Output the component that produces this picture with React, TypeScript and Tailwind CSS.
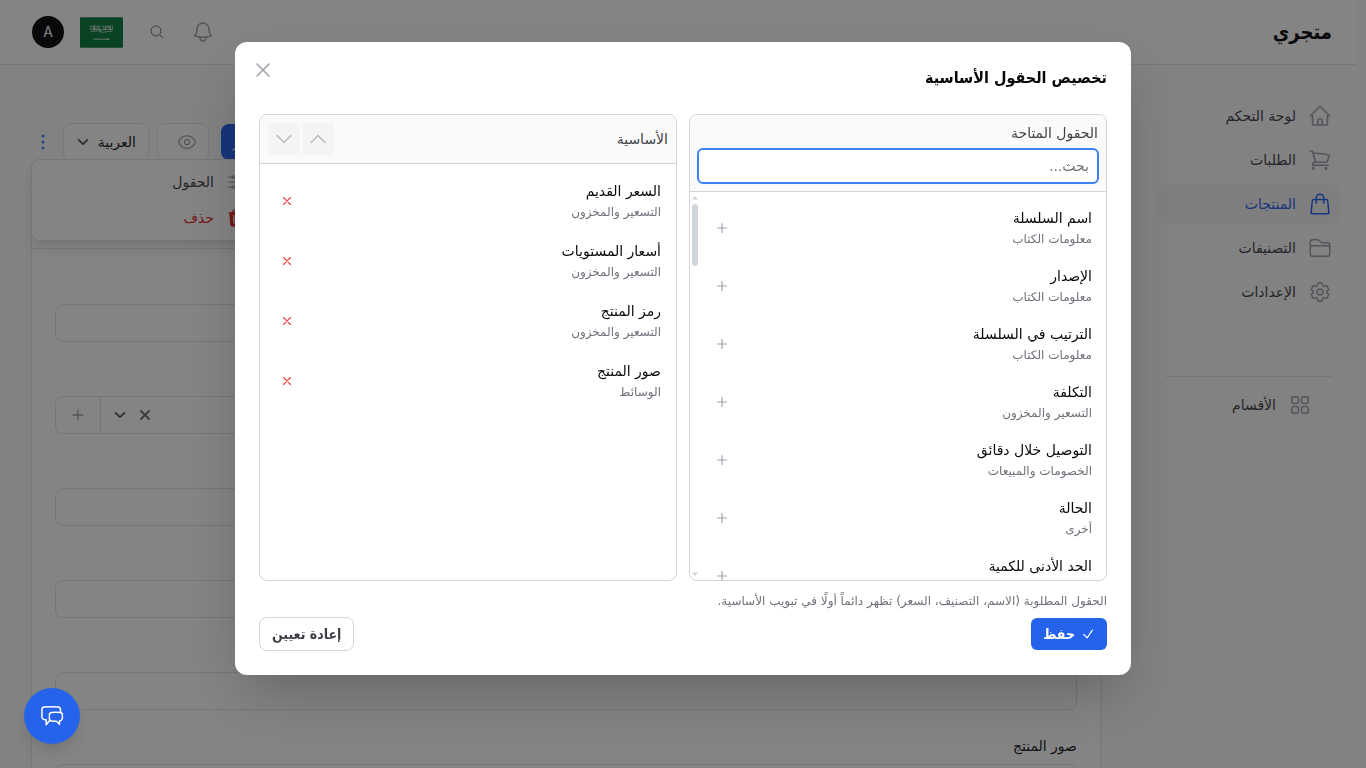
import { useState } from 'react'
import {
    HiOutlineHome,
    HiOutlineShoppingCart,
    HiOutlineShoppingBag,
    HiOutlineFolder,
    HiOutlineCog6Tooth,
    HiOutlineSquares2X2,
    HiOutlineBell,
    HiOutlineEye,
    HiOutlineXMark,
    HiOutlineChevronUp,
    HiOutlineChevronDown,
    HiOutlineCheck,
    HiOutlinePlus,
    HiTrash,
    HiOutlineMagnifyingGlass,
    HiEllipsisVertical,
    HiOutlineAdjustmentsHorizontal,
} from 'react-icons/hi2'

const navItems = [
    { label: 'لوحة التحكم', icon: HiOutlineHome, active: false },
    { label: 'الطلبات', icon: HiOutlineShoppingCart, active: false },
    { label: 'المنتجات', icon: HiOutlineShoppingBag, active: true },
    { label: 'التصنيفات', icon: HiOutlineFolder, active: false },
    { label: 'الإعدادات', icon: HiOutlineCog6Tooth, active: false },
]

const availableFields = [
    ['اسم السلسلة', 'معلومات الكتاب'],
    ['الإصدار', 'معلومات الكتاب'],
    ['الترتيب في السلسلة', 'معلومات الكتاب'],
    ['التكلفة', 'التسعير والمخزون'],
    ['التوصيل خلال دقائق', 'الخصومات والمبيعات'],
    ['الحالة', 'أخرى'],
    ['الحد الأدنى للكمية', ''],
]

const essentialFields = [
    ['السعر القديم', 'التسعير والمخزون'],
    ['أسعار المستويات', 'التسعير والمخزون'],
    ['رمز المنتج', 'التسعير والمخزون'],
    ['صور المنتج', 'الوسائط'],
]

function Header() {
    return (
        <header className="flex h-[65px] items-center justify-between border-b border-zinc-200 bg-white pr-6 pl-8">
            <span className="font-['DejaVu_Sans_Condensed','DejaVu_Sans',sans-serif] text-xl font-bold text-zinc-950">
                متجري
            </span>
            <div className="flex items-center">
                <button type="button" aria-label="الإشعارات" className="ml-5 text-zinc-400">
                    <HiOutlineBell className="size-6" />
                </button>
                <button type="button" aria-label="بحث" className="mx-1.5 text-zinc-500">
                    <HiOutlineMagnifyingGlass className="size-4" />
                </button>
                <svg viewBox="0 0 42 30" className="mr-5 ml-4 h-[31px] w-[43px]" aria-hidden="true">
                    <rect width="42" height="30" rx="1" fill="#0a7a3c" />
                    <path
                        d="M10.500 8v5M12 8l2 5M14 7.500v4h3M17 8l2 5M19.500 8v5h2M22 8l2 4M25 8v5M27 8l2 4M29.500 8v5M31.500 8v5M10.500 14c4 1 6-2 9 0s8-1 12 0M11 12h7M21 12h10M13 9.500h5M24 9.500h6"
                        stroke="#fff"
                        strokeOpacity="0.8"
                        strokeWidth="0.8"
                        fill="none"
                    />
                    <path d="M13 21.500h16M27 20.500v2" stroke="#fff" strokeOpacity="0.8" strokeWidth="0.9" />
                </svg>
                <button
                    type="button"
                    className="size-8 rounded-full bg-zinc-950 font-['Inter',sans-serif] text-sm text-white"
                >
                    A
                </button>
            </div>
        </header>
    )
}

function Sidebar() {
    return (
        <aside className="w-[199px] shrink-0 pt-[31px] pr-4">
            <nav className="flex flex-col gap-1">
                {navItems.map(({ label, icon: Icon, active }) => (
                    <a
                        key={label}
                        href="#"
                        className={
                            active
                                ? 'flex h-10 items-center gap-3 rounded-lg bg-zinc-100 px-2 text-[#2563eb]'
                                : 'flex h-10 items-center gap-3 rounded-lg px-2 text-zinc-700'
                        }
                    >
                        <Icon className={active ? 'size-6' : 'size-6 text-zinc-400'} />
                        {label}
                    </a>
                ))}
            </nav>
            <div className="mx-2 mt-16 border-t border-zinc-200 pt-2">
                <a href="#" className="flex h-10 items-center gap-3 px-5 text-zinc-700">
                    <HiOutlineSquares2X2 className="size-6 text-zinc-400" />
                    الأقسام
                </a>
            </div>
        </aside>
    )
}

function Toolbar() {
    return (
        <div className="relative flex items-center justify-end">
            <button type="button" className="h-9 w-24 rounded-lg bg-[#2563eb] pl-3 text-left text-white">
                نشر
            </button>
            <button
                type="button"
                aria-label="معاينة"
                className="mr-3 flex h-[38px] w-[52px] items-center justify-center rounded-lg border border-zinc-200 bg-white pl-2 text-zinc-400"
            >
                <HiOutlineEye className="size-5" />
            </button>
            <button
                type="button"
                className="mr-2 flex h-[38px] w-[86px] items-center justify-between rounded-lg border border-zinc-200 bg-white px-3 text-zinc-900"
            >
                العربية
                <HiOutlineChevronDown className="size-3.5 text-zinc-600" strokeWidth={3} />
            </button>
            <button type="button" aria-label="المزيد" className="mr-2 text-[#3b82f6]">
                <HiEllipsisVertical className="size-6" />
            </button>
            <div className="absolute top-9 left-0 z-10 w-58 rounded-lg border border-zinc-200 bg-white py-1 shadow-lg">
                <button type="button" className="flex h-9 w-full items-center gap-3 px-4 text-zinc-700">
                    <HiOutlineAdjustmentsHorizontal className="size-5 text-zinc-400" />
                    الحقول
                </button>
                <button type="button" className="flex h-9 w-full items-center gap-3 px-4 text-[#dc2626]">
                    <HiTrash className="size-5" />
                    حذف
                </button>
            </div>
        </div>
    )
}

const inputClass = 'block h-[38px] w-full rounded-lg border border-zinc-200 bg-transparent px-3'

function ProductForm() {
    return (
        <main className="min-w-0 flex-1 pt-[58px] pr-14 pl-[31px]">
            <Toolbar />
            <div className="rounded-lg border border-zinc-200 bg-white pt-[86px]">
                <div className="border-t border-zinc-200" />
                <div className="flex flex-col gap-[54px] px-[23px] pt-[55px]">
                    <input aria-label="الاسم" className={inputClass} />
                    <div className="flex h-[38px] items-stretch rounded-lg border border-zinc-200">
                        <div className="flex flex-1 items-center justify-end gap-2.5 px-3">
                            <button type="button" aria-label="مسح" className="text-zinc-500">
                                <HiOutlineXMark className="size-4" strokeWidth={3} />
                            </button>
                            <button type="button" aria-label="فتح" className="text-zinc-600">
                                <HiOutlineChevronDown className="size-3.5" strokeWidth={3} />
                            </button>
                        </div>
                        <button
                            type="button"
                            aria-label="إضافة"
                            className="flex w-[45px] items-center justify-center border-r border-zinc-200 text-zinc-400"
                        >
                            <HiOutlinePlus className="size-4" strokeWidth={2} />
                        </button>
                    </div>
                    <input aria-label="التصنيف" className={inputClass} />
                    <input aria-label="السعر" className={inputClass} />
                    <input aria-label="رمز المنتج" className={inputClass} />
                </div>
                <div className="px-[23px] pt-6">
                    <label htmlFor="product-images" className="mb-1.5 block leading-6 text-zinc-900">
                        صور المنتج
                    </label>
                    <input id="product-images" className={inputClass} />
                </div>
            </div>
        </main>
    )
}

function ScrollTrack() {
    return (
        <div className="flex w-2.5 shrink-0 flex-col items-center py-1" aria-hidden="true">
            <svg viewBox="0 0 6 4" className="mb-1 h-1 w-1.5 fill-zinc-300">
                <path d="M3 0 6 3.500H0z" />
            </svg>
            <div className="h-[62px] w-1.5 rounded-full bg-gray-300" />
            <svg viewBox="0 0 6 4" className="mt-auto h-1 w-1.5 fill-zinc-300">
                <path d="M3 4 0 .5h6z" />
            </svg>
        </div>
    )
}

function AvailablePanel() {
    const [query, setQuery] = useState('')
    const visible = availableFields.filter(([name]) => name.includes(query))

    return (
        <section className="flex min-h-0 flex-1 flex-col overflow-hidden rounded-lg border border-zinc-300">
            <div className="border-b border-zinc-300 bg-zinc-50 p-[7px]">
                <label htmlFor="field-search" className="mb-1 block px-px leading-[22px] text-zinc-700">
                    الحقول المتاحة
                </label>
                <input
                    id="field-search"
                    value={query}
                    onChange={(e) => setQuery(e.target.value)}
                    placeholder="بحث..."
                    className="block h-9 w-full rounded-md border-2 border-[#3b82f6] bg-white px-2 outline-none placeholder:text-zinc-500"
                />
            </div>
            <div className="flex min-h-0 flex-1">
                <ul className="flex min-w-0 flex-1 flex-col gap-0.5 overflow-y-auto p-2">
                    {visible.map(([name, group]) => (
                        <li key={name} className="flex h-14 shrink-0 items-center justify-between px-1.5">
                            <div className="leading-5">
                                <p className="text-zinc-950">{name}</p>
                                <p className="h-5 text-xs leading-[22px] text-zinc-500">{group}</p>
                            </div>
                            <button type="button" aria-label={`إضافة ${name}`} className="px-px text-zinc-400">
                                <HiOutlinePlus className="size-3.5" strokeWidth={2} />
                            </button>
                        </li>
                    ))}
                </ul>
                <ScrollTrack />
            </div>
        </section>
    )
}

function EssentialPanel() {
    return (
        <section className="flex min-h-0 flex-1 flex-col overflow-hidden rounded-lg border border-zinc-300">
            <div className="flex items-center justify-between border-b border-zinc-300 bg-zinc-50 p-2">
                <h3 className="text-zinc-700">الأساسية</h3>
                <div className="flex gap-0.5 text-[#b8b8bc]">
                    <button type="button" aria-label="أعلى" className="flex size-8 items-center justify-center rounded bg-zinc-100">
                        <HiOutlineChevronUp className="size-[22px]" />
                    </button>
                    <button type="button" aria-label="أسفل" className="flex size-8 items-center justify-center rounded bg-zinc-100">
                        <HiOutlineChevronDown className="size-[22px]" />
                    </button>
                </div>
            </div>
            <ul className="flex flex-col gap-0.5 p-2">
                {essentialFields.map(([name, group]) => (
                    <li key={name} className="flex h-[58px] items-center justify-between px-[7px]">
                        <div className="leading-5">
                            <p className="text-zinc-950">{name}</p>
                            <p className="h-5 text-xs leading-[22px] text-zinc-500">{group}</p>
                        </div>
                        <button
                            type="button"
                            aria-label={`إزالة ${name}`}
                            className="flex w-6 items-center justify-center text-[#ef4444]"
                        >
                            <HiOutlineXMark className="size-3.5" strokeWidth={2} />
                        </button>
                    </li>
                ))}
            </ul>
        </section>
    )
}

function FieldsDialog() {
    return (
        <div
            role="dialog"
            aria-modal="true"
            aria-labelledby="dialog-title"
            className="relative w-full max-w-4xl rounded-xl bg-white p-6 shadow-2xl"
        >
            <button type="button" aria-label="إغلاق" className="absolute top-4 left-4 text-zinc-400">
                <HiOutlineXMark className="size-6" />
            </button>
            <h2
                id="dialog-title"
                className="font-['DejaVu_Sans_Condensed','DejaVu_Sans',sans-serif] text-base leading-6 font-bold text-zinc-950"
            >
                تخصيص الحقول الأساسية
            </h2>
            <div className="mt-6 flex h-[467px] gap-3">
                <AvailablePanel />
                <EssentialPanel />
            </div>
            <p className="mt-3 text-xs leading-4 text-zinc-500">
                الحقول المطلوبة (الاسم، التصنيف، السعر) تظهر دائماً أولًا في تبويب الأساسية.
            </p>
            <div className="mt-2 flex items-center justify-between font-['DejaVu_Sans_Condensed','DejaVu_Sans',sans-serif] font-bold">
                <button
                    type="button"
                    className="flex h-8 items-center gap-1.5 rounded-md bg-[#2563eb] px-3 text-white"
                >
                    <HiOutlineCheck className="size-3.5" strokeWidth={2} />
                    حفظ
                </button>
                <button
                    type="button"
                    className="h-[34px] rounded-lg border border-zinc-300 bg-white px-3 text-zinc-700"
                >
                    إعادة تعيين
                </button>
            </div>
        </div>
    )
}

export default function App() {
    return (
        <div dir="rtl" className="h-screen overflow-hidden bg-zinc-50 pr-2.5 font-['DejaVu_Sans',sans-serif] text-sm">
            <Header />
            <div className="flex">
                <Sidebar />
                <ProductForm />
            </div>

            <div className="fixed inset-0 z-20 flex items-start justify-center bg-zinc-950/50 pt-[42px]">
                <FieldsDialog />
            </div>

            <button
                type="button"
                aria-label="محادثة"
                className="fixed bottom-6 left-6 z-30 flex size-14 items-center justify-center rounded-full bg-[#2563eb] text-white shadow-lg"
            >
                <svg
                    viewBox="0 0 24 24"
                    className="size-6"
                    fill="none"
                    stroke="currentColor"
                    strokeWidth="1.500"
                    strokeLinejoin="round"
                    strokeLinecap="round"
                >
                    <path d="M9.500 16.800 6.200 20.800V15.800L4 15.400C2.700 15.100 1.900 14.200 1.900 12.900V5.800C1.900 4.400 2.800 3.300 4.200 3.100C8.800 2.500 13.500 2.500 18 3.100C19.600 3.300 20.500 4.400 20.500 5.800V8.300" />
                    <path d="M11.500 8.500C14.300 8.200 17.300 8.200 20.200 8.500C21.600 8.700 22.400 9.500 22.400 10.700V14.200C22.400 15.500 21.700 16.400 20.400 16.700L19.500 16.900V20.300L16.400 17.200C14.600 17.200 13 17.100 11.500 16.900C10.100 16.700 9.400 15.700 9.400 14.400V10.700C9.400 9.500 10.200 8.700 11.500 8.500Z" />
                </svg>
            </button>
        </div>
    )
}
